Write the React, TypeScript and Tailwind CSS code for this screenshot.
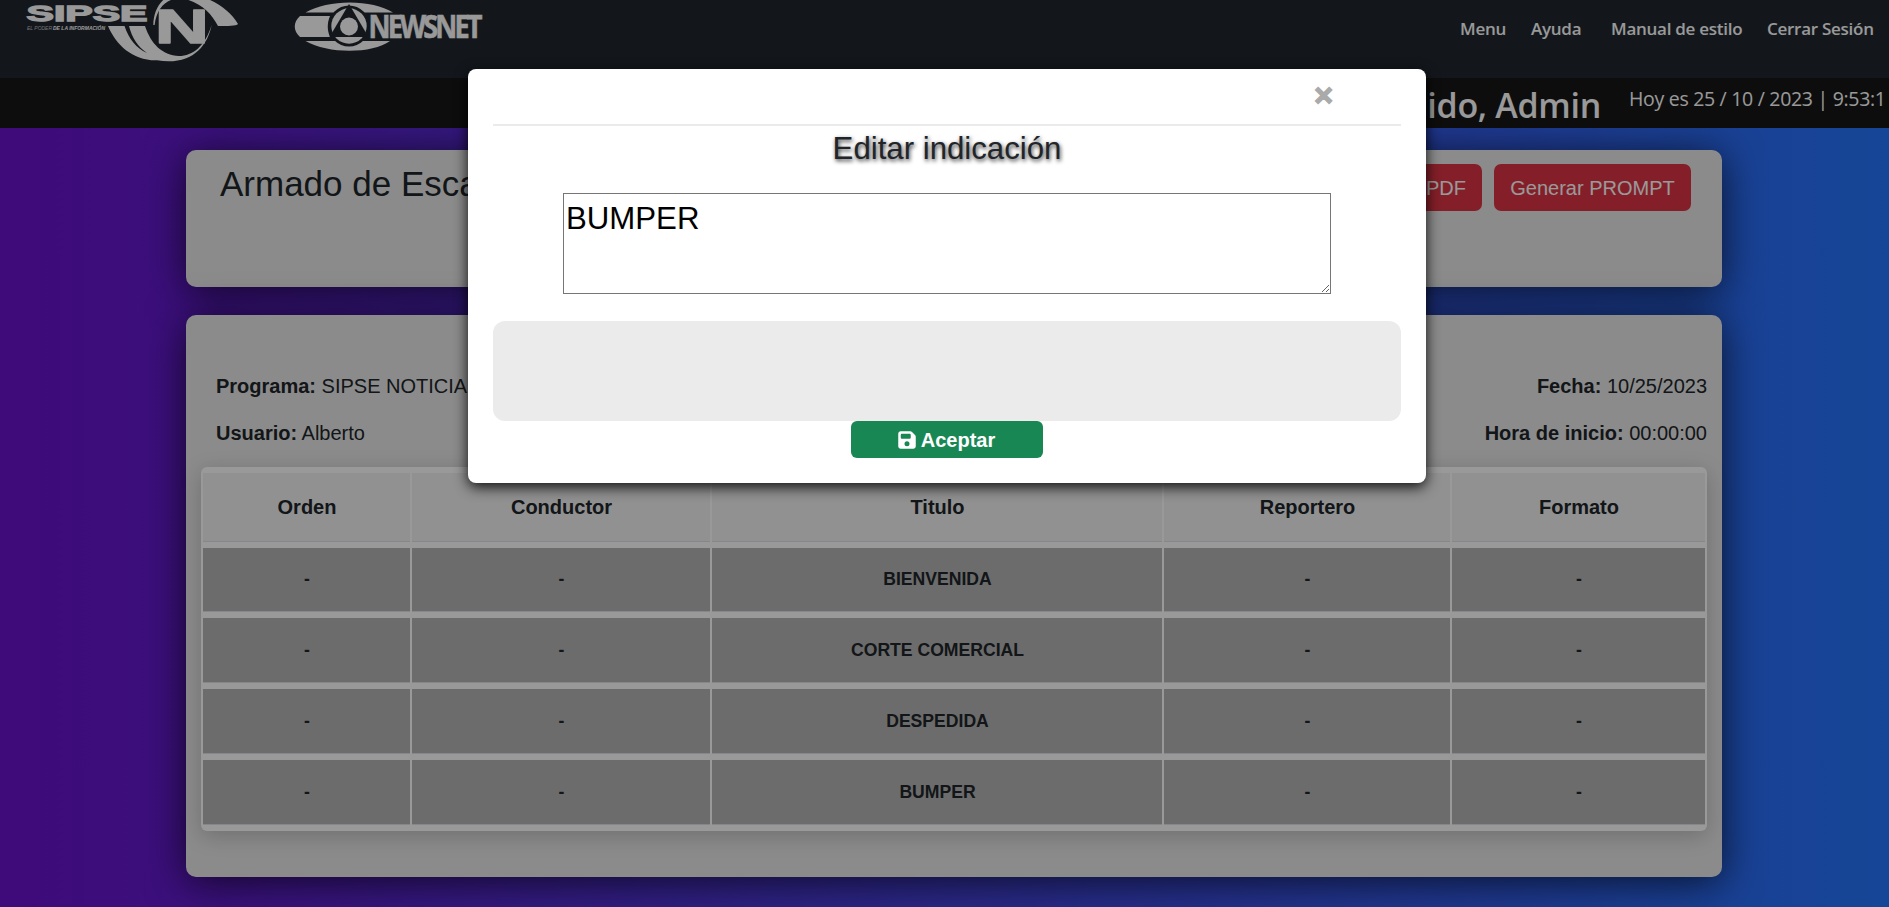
import { FaFloppyDisk } from 'react-icons/fa6';

const columns = ['Orden', 'Conductor', 'Titulo', 'Reportero', 'Formato'];
const rows = ['BIENVENIDA', 'CORTE COMERCIAL', 'DESPEDIDA', 'BUMPER'];

function SipseLogo() {
  return (
    <svg className="block h-[78px] w-[250px] overflow-visible" viewBox="0 0 250 78" fill="#fff">
      <g fontFamily="Liberation Sans" fontWeight="700">
        <text x="26.5" y="21.2" fontSize="22.5" textLength="121" lengthAdjust="spacingAndGlyphs" stroke="#fff" strokeWidth="1.3">
          SIPSE
        </text>
        <text x="27" y="29.6" fontSize="5" textLength="25" lengthAdjust="spacingAndGlyphs" fontStyle="italic" fontWeight="400" fillOpacity="0.7">
          EL PODER
        </text>
        <text x="53" y="29.6" fontSize="5" textLength="52" lengthAdjust="spacingAndGlyphs" fontStyle="italic">
          DE LA INFORMACIÓN
        </text>
        <text
          transform="translate(155 43) scale(1.52 1)"
          fontSize="49"
          stroke="#fff"
          strokeWidth="1.6"
          strokeLinejoin="round"
        >
          N
        </text>
      </g>
      <path d="M108 26C116 45 133 61 157 60.3C190 66 207 48 211.7 25C205 46 193 56 179 56C162 55 151 44 145 26H129C132 38 138 47 147 53C136 48 129 39 124.5 26Z" />
      <path d="M153.3 25C153.5 13 158 3 167 -3H203C219 3 231 12 238 24C236 26 228 26 218 26C212 14 201 3 185 -1C170 -4 157 5 154.6 25Z" />
    </svg>
  );
}

function NewsnetLogo() {
  return (
    <svg className="block h-[78px] w-[240px] overflow-visible" viewBox="250 0 240 78" fill="#fff">
      <path d="M305.5 12.5C328 -1 372 -1 393 12.5Z" />
      <path d="M305.5 41C328 54 372 54 390 41Z" />
      <path d="M300 16H330C327 23 327 30 330 37H300C293 31 293 22 300 16Z" />
      <circle cx="349" cy="26" r="20.5" fill="#21272f" />
      <circle cx="349" cy="26" r="17.7" />
      <path d="M349 4L329.5 37H368.5Z" fill="#21272f" />
      <circle cx="349" cy="26.5" r="9" />
      <text
        x="368.5"
        y="38.3"
        fontFamily="Open Sans"
        fontWeight="700"
        fontSize="33"
        textLength="111"
        lengthAdjust="spacingAndGlyphs"
        letterSpacing="-3.5"
        stroke="#fff"
        strokeWidth="0.6"
      >
        NEWSNET
      </text>
    </svg>
  );
}

function Navbar() {
  return (
    <header className="relative z-10 flex h-[78px] items-start justify-between bg-[#21272f]">
      <div className="flex">
        <SipseLogo />
        <NewsnetLogo />
      </div>
      <nav className="flex pt-[14px] font-['Open_Sans',sans-serif] text-[17px] leading-[30px] font-semibold tracking-[-0.27px] whitespace-nowrap text-white">
        <a className="w-[71px]">Menu</a>
        <a className="w-[80px]">Ayuda</a>
        <a className="w-[156px]">Manual de estilo</a>
        <a className="w-[122px]">Cerrar Sesión</a>
      </nav>
    </header>
  );
}

function WelcomeBar() {
  return (
    <div className="relative z-10 flex h-[50px] justify-end overflow-hidden bg-[#161616] font-['Open_Sans',sans-serif] whitespace-nowrap text-white">
      <p className="mr-[28px] pt-[5px] text-[34px] leading-[44px] font-semibold tracking-[-0.3px]">Bienvenido, Admin</p>
      <p className="w-[260px] pt-[6px] text-[19.5px] leading-[30px] tracking-[-0.3px]">Hoy es 25 / 10 / 2023 | 9:53:1</p>
    </div>
  );
}

function Modal() {
  return (
    <div className="absolute inset-0 z-20 flex items-start justify-center bg-black/40 pt-[69px] pl-[5px]">
      <section className="flex h-[414px] w-[958px] flex-col items-center rounded-[8px] bg-white px-[25px] shadow-[0_4px_14px_rgba(0,0,0,0.9)]">
        <div className="flex h-[57px] w-full justify-end border-b-2 border-[#ebebeb] pr-[68px]">
          <button className="h-[52px] text-[32px] leading-[52px] font-bold text-[#aaa] [-webkit-text-stroke:1.5px_#aaa]">×</button>
        </div>
        <h4 className="mt-[5px] h-[36px] text-[31.2px] leading-[36px] font-normal [text-shadow:1px_2px_4px_rgba(0,0,0,0.8)]">
          Editar indicación
        </h4>
        <textarea
          defaultValue="BUMPER"
          className="mt-[26px] h-[101px] w-[768px] shrink-0 resize border border-[#767676] p-[2px] pt-[7px] text-[31.2px] leading-[36px] text-black"
        />
        <div className="mt-[27px] h-[100px] w-full shrink-0 rounded-[12px] bg-[#ebebeb]" />
        <button className="flex h-[37px] w-[192px] shrink-0 items-center justify-center gap-[4px] rounded-[6px] bg-[#198754] pr-[2px] text-[20px] font-bold text-white">
          <FaFloppyDisk className="size-[20px]" />
          Aceptar
        </button>
      </section>
    </div>
  );
}

export default function App() {
  return (
    <div className="relative h-[907px] w-[1889px] overflow-hidden bg-linear-to-r/srgb from-[#6a11cb] to-[#2575fc] font-['Liberation_Sans',Arial,sans-serif] text-[#212529]">
      <Navbar />
      <WelcomeBar />
      <main className="flex flex-col gap-[28px] pt-[22px] pr-[167px] pl-[186px]">
        <section className="flex h-[137px] items-start justify-between rounded-[10px] bg-[#e8e8e8] pt-[14px] pr-[31px] pl-[34px] shadow-[0_5px_40px_rgba(0,0,0,0.7)]">
          <h2 className="-mt-px text-[35px] leading-[42px]">Armado de Escaleta</h2>
          <div className="flex gap-[12px] text-[20px] text-white">
            <button className="h-[47px] rounded-[7px] bg-[#dc3545] px-[16px]">Generar PDF</button>
            <button className="h-[47px] w-[197px] rounded-[7px] bg-[#dc3545]">Generar PROMPT</button>
          </div>
        </section>
        <section className="h-[562px] rounded-[10px] bg-[#e8e8e8] px-[15px] pt-[48px] shadow-[0_5px_40px_rgba(0,0,0,0.7)]">
          <div className="flex h-[104px] justify-between pl-[15px] text-[20px] leading-[47px]">
            <div>
              <p><b>Programa:</b> SIPSE NOTICIAS</p>
              <p><b>Usuario:</b> Alberto</p>
            </div>
            <div className="text-right">
              <p><b>Fecha:</b> 10/25/2023</p>
              <p><b>Hora de inicio:</b> 00:00:00</p>
            </div>
          </div>
          <table className="w-[1506px] table-fixed border-separate border-spacing-x-[2px] border-spacing-y-[6px] rounded-[6px] bg-white text-center font-bold shadow-[0_5px_22px_rgba(0,0,0,0.2)]">
            <colgroup>
              <col className="w-[207px]" />
              <col className="w-[298px]" />
              <col className="w-[450px]" />
              <col className="w-[286px]" />
              <col className="w-[253px]" />
            </colgroup>
            <thead>
              <tr>
                {columns.map((name) => (
                  <th key={name} className="h-[69px] border-b border-[#dee2e6] bg-[#f2f2f2] p-0 pl-[1px] text-[20px]">{name}</th>
                ))}
              </tr>
            </thead>
            <tbody className="text-[17.6px]">
              {rows.map((title) => (
                <tr key={title} className="h-[65px] first:h-[64px]">
                  {columns.map((name) => (
                    <td key={name} className="border-b border-[#dee2e6] bg-[#b4b4b4] p-0 pl-[1px]">
                      {name === 'Titulo' ? title : '-'}
                    </td>
                  ))}
                </tr>
              ))}
            </tbody>
          </table>
        </section>
      </main>
      <Modal />
    </div>
  );
}
